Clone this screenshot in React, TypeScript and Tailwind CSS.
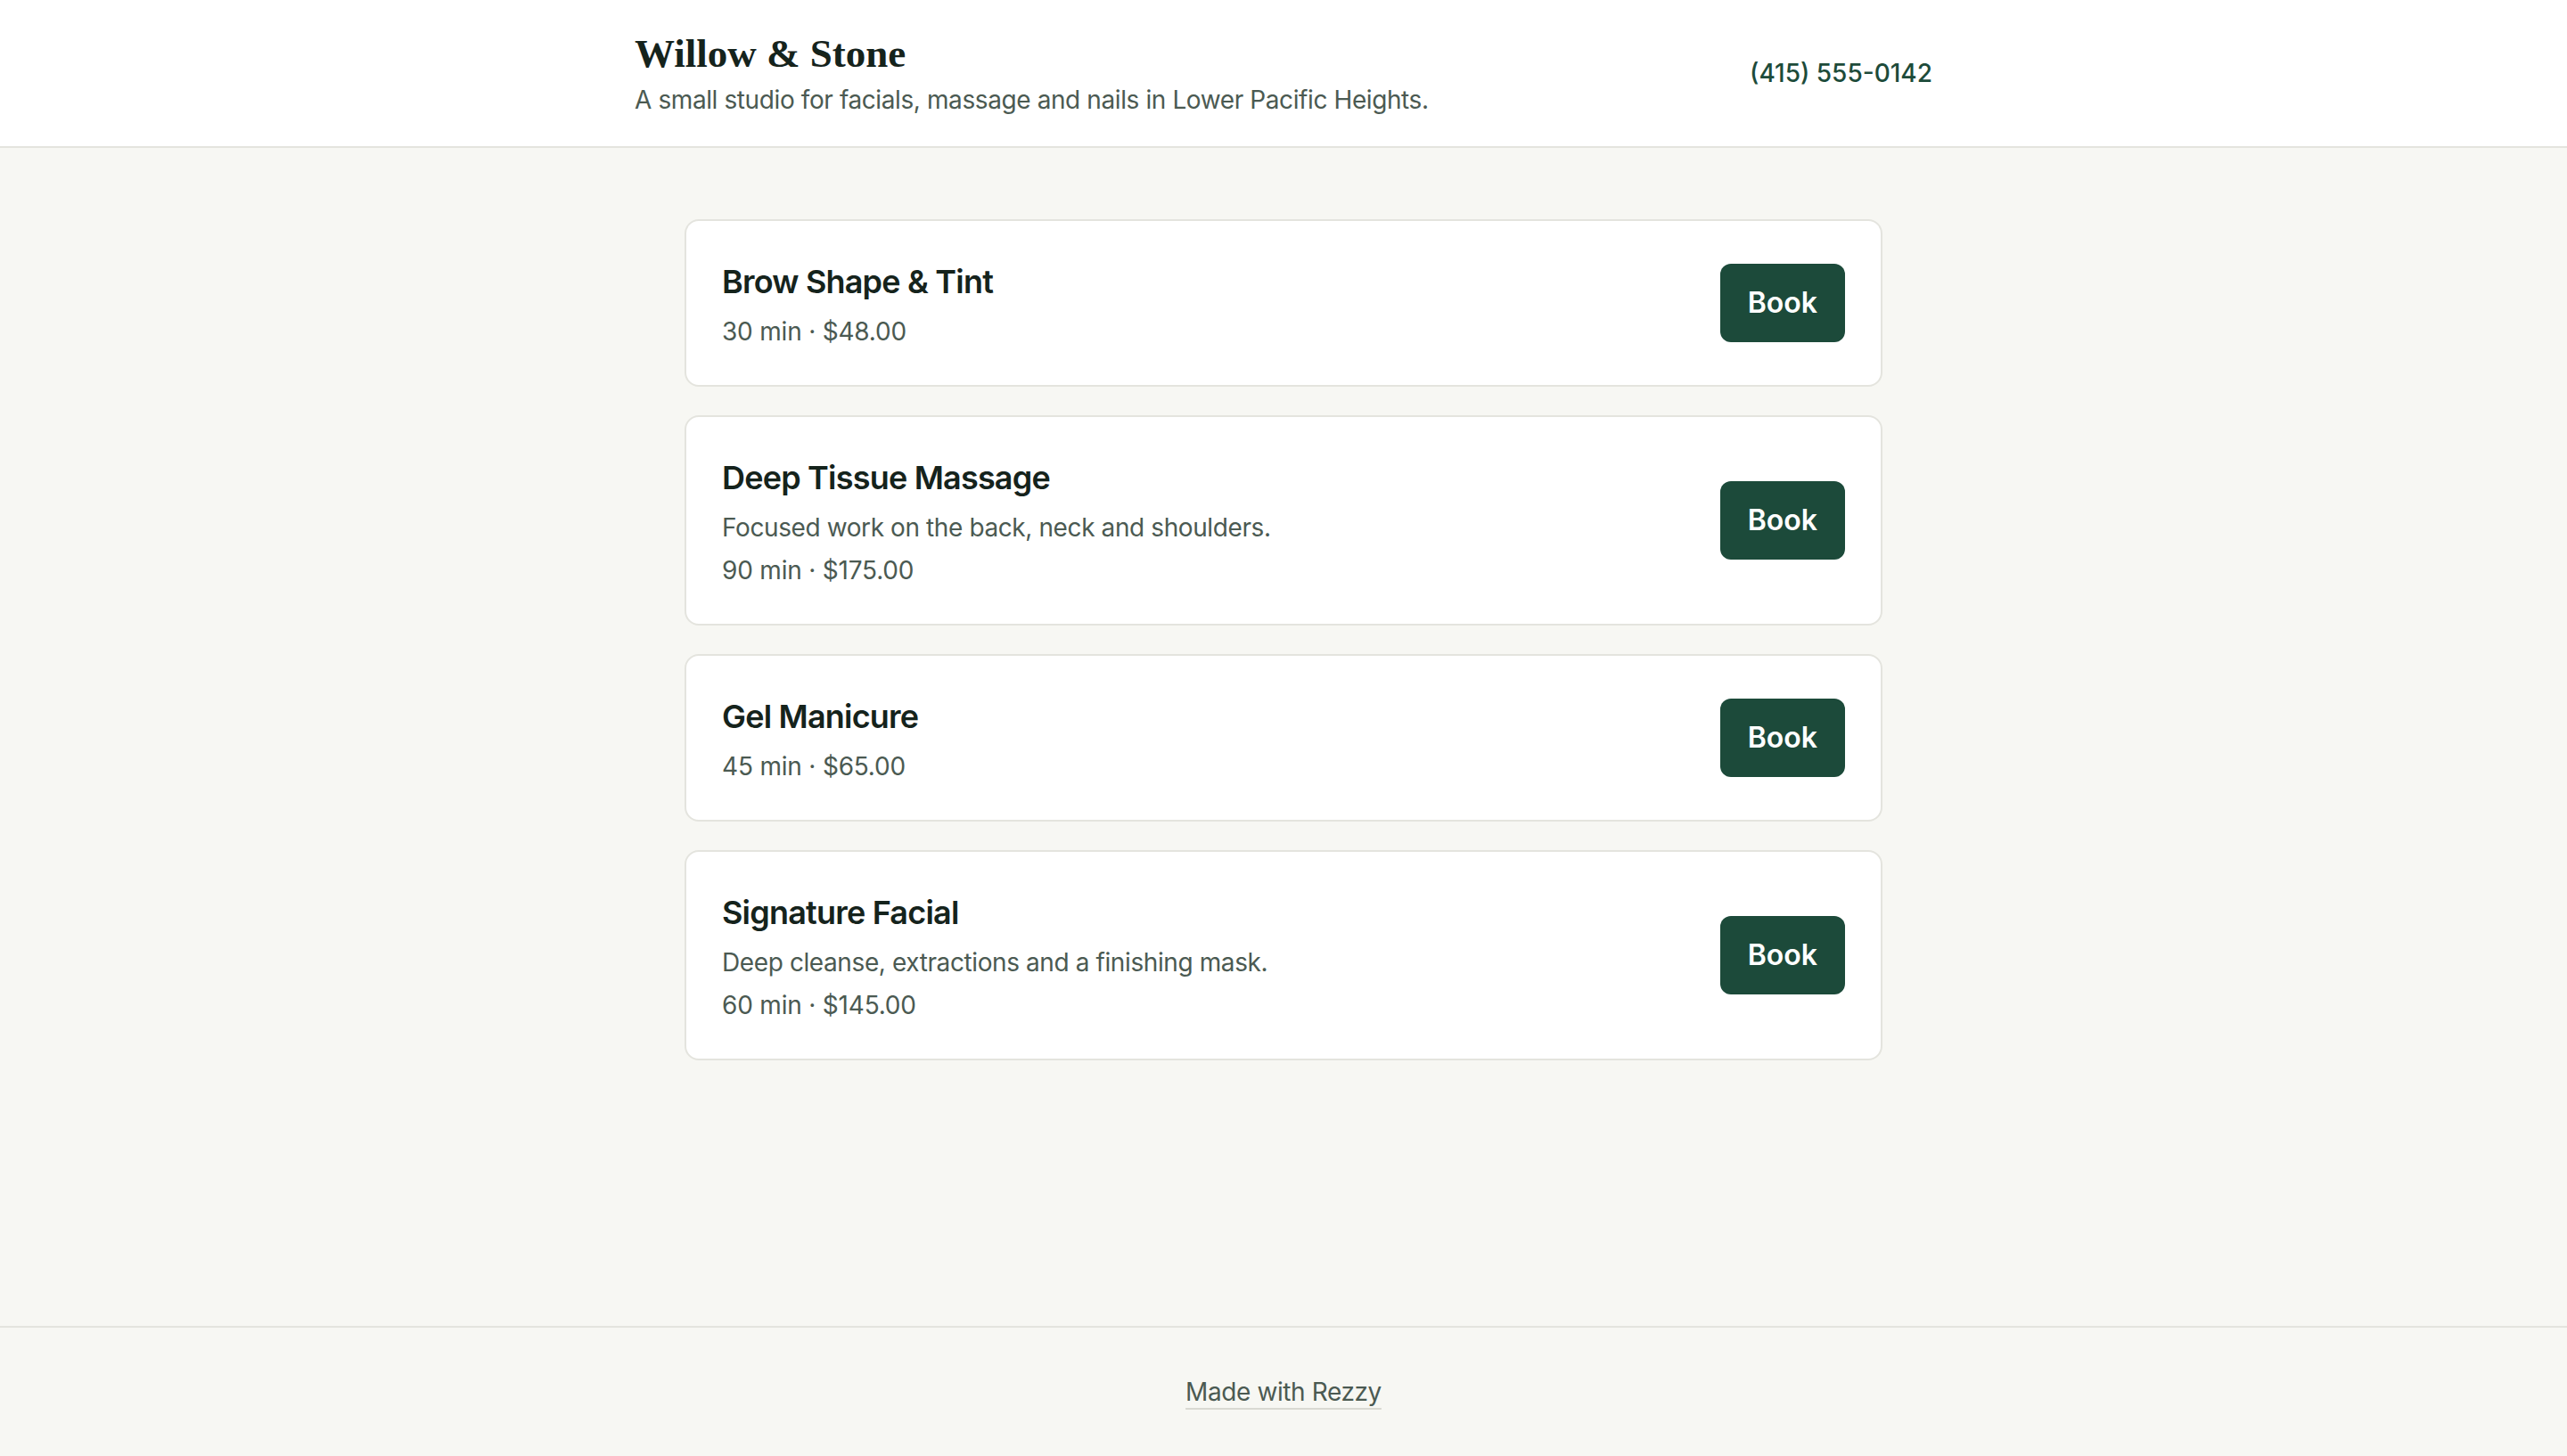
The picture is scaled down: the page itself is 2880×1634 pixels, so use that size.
import React from "react";

type Service = {
  name: string;
  description?: string;
  minutes: number;
  price: string;
};

const SERVICES: Service[] = [
  { name: "Brow Shape & Tint", minutes: 30, price: "$48.00" },
  {
    name: "Deep Tissue Massage",
    description: "Focused work on the back, neck and shoulders.",
    minutes: 90,
    price: "$175.00",
  },
  { name: "Gel Manicure", minutes: 45, price: "$65.00" },
  {
    name: "Signature Facial",
    description: "Deep cleanse, extractions and a finishing mask.",
    minutes: 60,
    price: "$145.00",
  },
];

export default function App() {
  return (
    <div className="flex min-h-screen flex-col bg-[#f7f7f3] font-['Inter','Liberation_Sans',sans-serif] antialiased">
      {/* Header */}
      <header className="border-b-2 border-[#e4e4de] bg-white">
        <div className="mx-auto flex max-w-[1536px] items-center justify-between px-[40px] py-[32px]">
          <div>
            <h1 className="font-['Liberation_Serif','DejaVu_Serif',serif] text-[45px] leading-[56px] font-bold text-[#15231c]">
              Willow &amp; Stone
            </h1>
            <p className="mt-[4px] text-[28px] leading-[40px] tracking-[-0.4px] text-[#4b5a52]">
              A small studio for facials, massage and nails in Lower Pacific Heights.
            </p>
          </div>
          <a href="#" className="text-[28px] leading-[40px] font-medium text-[#1d4b3a]">
            (415) 555-0142
          </a>
        </div>
      </header>

      {/* Services */}
      <main className="flex-1 px-[40px] pt-[80px] pb-[80px]">
        <ul className="mx-auto flex max-w-[1344px] flex-col gap-[32px]">
          {SERVICES.map((s) => (
            <li
              key={s.name}
              className="flex items-center justify-between gap-[32px] rounded-[16px] border-2 border-[#e4e4de] bg-white p-[40px]"
            >
              <div>
                <h2 className="text-[36px] leading-[56px] font-semibold tracking-[-0.8px] text-[#15231c]">
                  {s.name}
                </h2>
                {s.description && (
                  <p className="mt-[8px] text-[28px] leading-[40px] tracking-[-0.4px] text-[#4b5a52]">
                    {s.description}
                  </p>
                )}
                <p className="mt-[8px] text-[28px] leading-[40px] tracking-[-0.2px] text-[#4b5a52]">
                  {s.minutes} min · {s.price}
                </p>
              </div>
              <button className="h-[88px] shrink-0 rounded-[12px] bg-[#1c4a3a] px-[31px] text-[32px] font-semibold text-white">
                Book
              </button>
            </li>
          ))}
        </ul>
      </main>

      {/* Footer */}
      <footer className="border-t-2 border-[#e4e4de] py-[48px] text-center">
        <a
          href="#"
          className="text-[28px] leading-[48px] tracking-[-0.4px] text-[#4b5a52] underline decoration-[#d9d9d2] decoration-2 underline-offset-[8px]"
        >
          Made with Rezzy
        </a>
      </footer>
    </div>
  );
}
